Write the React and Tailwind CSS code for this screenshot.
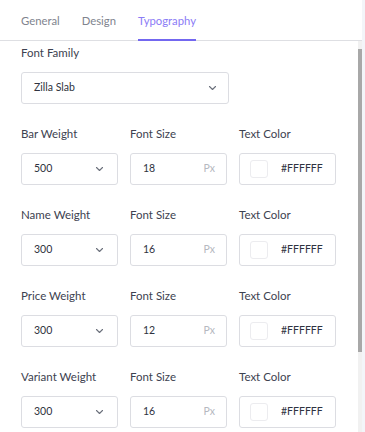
const rows = [
  { label: 'Bar Weight', weight: '500', size: '18' },
  { label: 'Name Weight', weight: '300', size: '16' },
  { label: 'Price Weight', weight: '300', size: '12' },
  { label: 'Variant Weight', weight: '300', size: '16' },
]

function Chevron() {
  return (
    <svg width="9" height="6" viewBox="0 0 9 6" fill="none">
      <path d="M1.5 1.5 L4.5 4.5 L7.5 1.5" stroke="#6b707b" strokeWidth="1.1" strokeLinecap="round" strokeLinejoin="round" />
    </svg>
  )
}

const box = 'h-[32px] rounded-[3px] border border-[#dcdde2] bg-white flex items-center'

export default function App() {
  return (
    <div className="w-[365px] h-[432px] flex bg-[#f3f5f9] overflow-hidden font-['Lato',sans-serif] text-[#3d4250]">
      <div className="w-[362px] bg-white flex flex-col">
        {/* Tabs */}
        <div className="h-[41px] flex-shrink-0 flex gap-[22px] px-[21px] border-b border-[#dedfe3]">
          <div className="text-[11.3px] text-[#80848e] pt-[13px]">General</div>
          <div className="text-[11.3px] text-[#80848e] pt-[13px]">Design</div>
          <div className="text-[11.3px] text-[#8b7cf6] pt-[13px] border-b-2 border-[#7367f0] -mb-px">Typography</div>
        </div>

        <div className="flex flex-1 overflow-hidden">
          <div className="flex-1 pl-[21px] pt-[5px]">
            <div className="text-[11.5px] leading-[14px]">Font Family</div>
            <div className={`${box} w-[208px] mt-[12px] pl-[12px] pr-[11px] justify-between`}>
              <span className="text-[10.5px] text-[#2f3340]">Zilla Slab</span>
              <Chevron />
            </div>

            {rows.map((r) => (
              <div key={r.label} className="mt-[23px]">
                <div className="grid grid-cols-[97px_97px_97px] gap-x-[12px] text-[11.5px] leading-[14px]">
                  <span>{r.label}</span>
                  <span>Font Size</span>
                  <span>Text Color</span>
                </div>
                <div className="grid grid-cols-[97px_97px_97px] gap-x-[12px] mt-[12px]">
                  <div className={`${box} pl-[12px] pr-[13px] justify-between`}>
                    <span className="text-[10.5px] text-[#2f3340]">{r.weight}</span>
                    <Chevron />
                  </div>
                  <div className={`${box} pl-[12px] pr-[11px] justify-between`}>
                    <span className="text-[10.5px] text-[#2f3340]">{r.size}</span>
                    <span className="text-[10.5px] text-[#b5b8c0]">Px</span>
                  </div>
                  <div className={`${box} pl-[10px] gap-[13px]`}>
                    <span className="w-[18px] h-[18px] rounded-[3px] border border-[#ececef] bg-white" />
                    <span className="text-[10.5px] text-[#2f3340]">#FFFFFF</span>
                  </div>
                </div>
              </div>
            ))}
          </div>

          {/* Scrollbar */}
          <div className="w-[4px] bg-[#f1f1f1] flex-shrink-0">
            <div className="mt-[8px] h-[303px] bg-[#a8a8a8]" />
          </div>
        </div>
      </div>
    </div>
  )
}
